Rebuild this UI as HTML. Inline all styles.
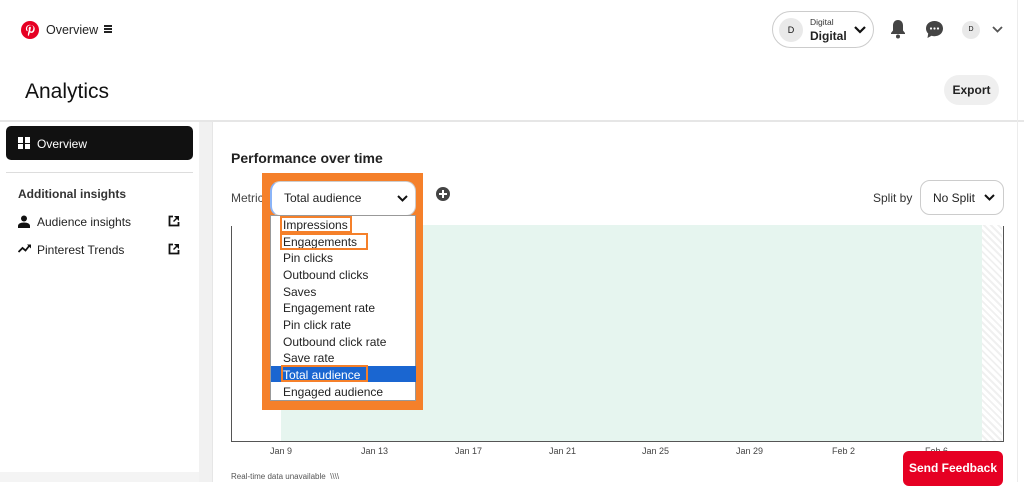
<!DOCTYPE html>
<html><head><meta charset="utf-8"><style>
*{margin:0;padding:0;box-sizing:border-box}
body{width:1024px;height:482px;overflow:hidden;background:#fff;font-family:"Liberation Sans",sans-serif;color:#111;position:relative}
.a{position:absolute}
.t{font-size:12px;color:#222}
.opt{position:absolute;left:283px;font-size:12px;color:#222;line-height:16px}
.box{position:absolute;border:2px solid #f5802a}
.xl{position:absolute;top:446px;font-size:9px;color:#444}
</style></head><body>
<svg class="a" style="left:21px;top:21px" width="18" height="18" viewBox="0 0 18 18"><circle cx="9" cy="9" r="9" fill="#e60023"/><path d="M9.3 3.8c-3 0-4.4 2.1-4.4 3.9 0 1.1.4 2 1.3 2.4.1.1.3 0 .3-.2l.1-.5c0-.2 0-.2-.1-.4-.3-.3-.4-.8-.4-1.4 0-1.8 1.3-3.300 3.4-3.3 1.9 0 2.9 1.1 2.9 2.6 0 2-.9 3.6-2.1 3.6-.7 0-1.2-.6-1-1.3.2-.9.6-1.8.6-2.4 0-.6-.3-1-.9-1-.7 0-1.3.8-1.3 1.8 0 .6.2 1.1.2 1.1l-.9 3.6c-.2 1-.1 2.3 0 2.8h.3c.3-.4.9-1.5 1.2-2.4l.4-1.5c.2.4.8.7 1.5.7 2 0 3.3-1.8 3.3-4.2 0-1.900-1.6-3.6-4.1-3.6z" fill="#fff"/></svg>
<div class="a" style="left:46px;top:23px;font-size:12.5px;color:#222">Overview</div>
<div class="a" style="left:104px;top:25px;width:8px;height:2px;background:#222;box-shadow:0 3px 0 #222,0 6px 0 #222"></div>
<div class="a" style="left:772px;top:11px;width:102px;height:37px;border:1px solid #ccc;border-radius:19px"></div>
<div class="a" style="left:779px;top:18px;width:24px;height:24px;border-radius:50%;background:#e9e9e9;font-size:9px;text-align:center;line-height:24px">D</div>
<div class="a" style="left:810px;top:17px;font-size:8.5px;color:#333">Digital</div>
<div class="a" style="left:810px;top:29px;font-size:12px;font-weight:bold;color:#222">Digital</div>
<svg class="a" style="left:854px;top:26px" width="12" height="8"><path d="M1 1l5 5 5-5" stroke="#111" stroke-width="2.2" fill="none"/></svg>
<svg class="a" style="left:890px;top:19px" width="16" height="20" viewBox="0 0 16 20"><path d="M8 1c-3 0-5 2.3-5 5.5v5L1 14v1h14v-1l-2-2.5v-5C13 3.3 11 1 8 1z" fill="#444"/><circle cx="8" cy="17.5" r="2" fill="#444"/></svg>
<svg class="a" style="left:925px;top:20px" width="19" height="19" viewBox="0 0 19 19"><path d="M9.5 1C4.5 1 1 4.3 1 8.5c0 2 .8 3.7 2.2 5L2.5 18l4-2.2c1 .3 2 .4 3 .4 5 0 8.5-3.4 8.5-7.7S14.5 1 9.5 1z" fill="#444"/><circle cx="6" cy="8.5" r="1.1" fill="#fff"/><circle cx="9.5" cy="8.5" r="1.1" fill="#fff"/><circle cx="13" cy="8.5" r="1.1" fill="#fff"/></svg>
<div class="a" style="left:962px;top:21px;width:18px;height:18px;border-radius:50%;background:#e9e9e9;font-size:7px;text-align:center;line-height:18px">D</div>
<svg class="a" style="left:992px;top:26px" width="11" height="7"><path d="M1 1l4.5 4.5L10 1" stroke="#555" stroke-width="1.8" fill="none"/></svg>
<div class="a" style="left:25px;top:80px;font-size:21px;color:#111">Analytics</div>
<div class="a" style="left:944px;top:75px;width:55px;height:30px;border-radius:15px;background:#efefef;font-size:12px;font-weight:bold;text-align:center;line-height:30px;color:#222">Export</div>
<div class="a" style="left:0;top:120px;width:1024px;height:2px;background:#e6e6e6"></div>
<div class="a" style="left:1017px;top:0;width:1px;height:482px;background:#ececec"></div>
<div class="a" style="left:6px;top:126px;width:187px;height:34px;background:#111;border-radius:5px"></div>
<div class="a" style="left:18px;top:137px;width:5px;height:6px;background:#fff;box-shadow:7px 0 0 #fff"></div>
<div class="a" style="left:18px;top:144px;width:12px;height:5px;background:linear-gradient(90deg,#fff 5px,#111 5px,#111 7px,#fff 7px)"></div>
<div class="a" style="left:37px;top:137px;font-size:12px;color:#fff">Overview</div>
<div class="a" style="left:6px;top:172px;width:187px;height:1px;background:#ddd"></div>
<div class="a" style="left:18px;top:187px;font-size:12px;font-weight:bold;color:#333">Additional insights</div>
<svg class="a" style="left:18px;top:215px" width="12" height="13"><circle cx="6" cy="3.5" r="3" fill="#111"/><path d="M0 13v-2c0-2 2-3.5 6-3.5s6 1.5 6 3.5v2z" fill="#111"/></svg>
<div class="a t" style="left:37px;top:215px">Audience insights</div>
<svg class="a" style="left:168px;top:215px" width="12" height="12"><path d="M5 1.5H1.5v9h9V7" stroke="#111" stroke-width="1.8" fill="none"/><path d="M6 1h5v5L9 4 6 7 5 6l3-3z" fill="#111"/></svg>
<svg class="a" style="left:18px;top:244px" width="13" height="9"><path d="M0.5 8l4-4 3 2.5 4-5" stroke="#111" stroke-width="1.8" fill="none"/><path d="M9 0.5h4v4z" fill="#111"/></svg>
<div class="a t" style="left:37px;top:243px">Pinterest Trends</div>
<svg class="a" style="left:168px;top:243px" width="12" height="12"><path d="M5 1.5H1.5v9h9V7" stroke="#111" stroke-width="1.8" fill="none"/><path d="M6 1h5v5L9 4 6 7 5 6l3-3z" fill="#111"/></svg>
<div class="a" style="left:199px;top:122px;width:13px;height:360px;background:#f1f1f1"></div>
<div class="a" style="left:0;top:472px;width:199px;height:10px;background:#f4f4f4"></div>
<div class="a" style="left:212px;top:122px;width:1px;height:360px;background:#e6e6e6"></div>
<div class="a" style="left:231px;top:150px;font-size:14px;font-weight:bold;color:#222">Performance over time</div>
<div class="a t" style="left:231px;top:191px;color:#444">Metric</div>
<div class="a" style="left:436px;top:187px;width:14px;height:14px;border-radius:50%;background:#444"></div>
<div class="a" style="left:439px;top:193px;width:8px;height:2px;background:#fff"></div>
<div class="a" style="left:442px;top:190px;width:2px;height:8px;background:#fff"></div>
<div class="a t" style="left:873px;top:191px;color:#333">Split by</div>
<div class="a" style="left:920px;top:180px;width:84px;height:35px;border:1px solid #ccc;border-radius:10px"></div>
<div class="a t" style="left:933px;top:191px">No Split</div>
<svg class="a" style="left:984px;top:194px" width="11" height="7"><path d="M1 1l4.5 4.5L10 1" stroke="#111" stroke-width="2" fill="none"/></svg>
<div class="a" style="left:281px;top:225px;width:701px;height:216px;background:#e6f5ef"></div>
<div class="a" style="left:982px;top:225px;width:20px;height:216px;background:repeating-linear-gradient(45deg,#fff 0 3px,#f0f0f0 3px 5px)"></div>
<div class="a" style="left:231px;top:226px;width:1px;height:216px;background:#555"></div>
<div class="a" style="left:1003px;top:226px;width:1px;height:216px;background:#555"></div>
<div class="a" style="left:231px;top:441px;width:773px;height:1px;background:#555"></div>
<div class="xl" style="left:270px">Jan 9</div>
<div class="xl" style="left:361px">Jan 13</div>
<div class="xl" style="left:455px">Jan 17</div>
<div class="xl" style="left:549px">Jan 21</div>
<div class="xl" style="left:642px">Jan 25</div>
<div class="xl" style="left:736px">Jan 29</div>
<div class="xl" style="left:832px">Feb 2</div>
<div class="xl" style="left:925px">Feb 6</div>
<div class="a" style="left:231px;top:472px;font-size:8px;color:#555">Real-time data unavailable &nbsp;<span style="letter-spacing:0px">\\\\</span></div>
<div class="a" style="left:903px;top:451px;width:100px;height:35px;background:#e60023;border-radius:6px;color:#fff;font-size:12px;font-weight:bold;text-align:center;line-height:34px">Send Feedback</div>
<div class="a" style="left:262px;top:173px;width:161px;height:237px;background:#f5802a"></div>
<div class="a" style="left:270px;top:181px;width:146px;height:35px;background:#fff;border-radius:10px;border:1px solid #ccc;border-left:2px solid #8ab4f8"></div>
<div class="a t" style="left:284px;top:191px">Total audience</div>
<svg class="a" style="left:397px;top:195px" width="11" height="7"><path d="M1 1l4.5 4.5L10 1" stroke="#111" stroke-width="2" fill="none"/></svg>
<div class="a" style="left:270px;top:215px;width:146px;height:186px;background:#fff;border:1px solid #999"></div>
<div class="a" style="left:271px;top:366px;width:145px;height:16px;background:#1a66d1"></div>
<div class="opt" style="top:217px">Impressions</div>
<div class="opt" style="top:234px">Engagements</div>
<div class="opt" style="top:250px">Pin clicks</div>
<div class="opt" style="top:267px">Outbound clicks</div>
<div class="opt" style="top:284px">Saves</div>
<div class="opt" style="top:300px">Engagement rate</div>
<div class="opt" style="top:317px">Pin click rate</div>
<div class="opt" style="top:334px">Outbound click rate</div>
<div class="opt" style="top:350px">Save rate</div>
<div class="opt" style="top:367px;color:#fff">Total audience</div>
<div class="opt" style="top:384px">Engaged audience</div>
<div class="box" style="left:280px;top:216px;width:72px;height:17px"></div>
<div class="box" style="left:280px;top:233px;width:88px;height:17px"></div>
<div class="box" style="left:281px;top:365px;width:87px;height:17px"></div>
</body></html>
